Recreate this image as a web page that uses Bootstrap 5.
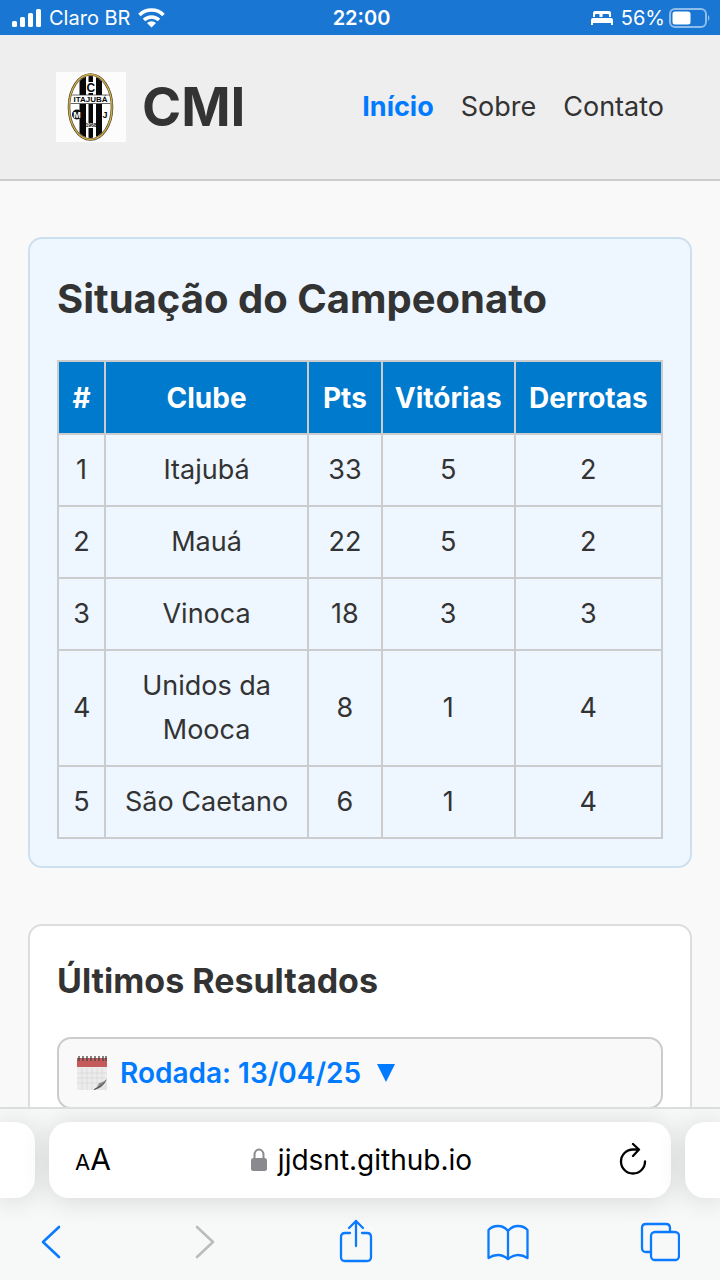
<!DOCTYPE html>
<html lang="pt-BR">
<head>
<meta charset="utf-8">
<meta name="viewport" content="width=device-width, initial-scale=1">
<title>CMI</title>
<link href="https://cdn.jsdelivr.net/npm/bootstrap@5.3.0/dist/css/bootstrap.min.css" rel="stylesheet">
<style>
  body { font-family: Inter, "Liberation Sans", sans-serif; font-size: 27px; line-height: 44px; color: #333; background: #f9f9f9; }
  button { font: inherit; }
  .status-bar { height: 35px; background: #1976d2; color: #fff; font-size: 20px; line-height: 36px; padding: 0 9px 0 12px; }
  .status-side { flex: 1 1 0; }
  .site-header { background: #eee; border-bottom: 2px solid #ccc; padding: 37px 56px; }
  .site-name { font-size: 53px; line-height: 70px; font-weight: 700; margin: 0; }
  .site-nav { gap: 27px; }
  .site-nav a { color: #333; text-decoration: none; }
  .site-nav a.active { color: #007bff; font-weight: 700; }
  .page-main { padding: 56px 28px; gap: 56px; }
  .panel { border: 2px solid #ddd; border-radius: 14px; background: #fff; padding: 27px; }
  .panel-blue { background: #eef6ff; border-color: #cce0f0; }
  .panel h2 { font-size: 40px; line-height: 66px; font-weight: 700; margin: 0 0 28px; }
  .panel h3 { font-size: 34px; line-height: 56px; font-weight: 700; margin: 0 0 28px; }
  .standings { width: 100%; table-layout: fixed; text-align: center; border-collapse: collapse; }
  .standings th, .standings td { border: 2px solid #ccc; padding: 13px 14px; }
  .standings th { background: #007acc; color: #fff; padding: 14px 0 13px; font-size: 28px; }
  .w-rank { width: 7.800%; } .w-club { width: 33.600%; } .w-pts { width: 12.200%; } .w-wins { width: 22%; }
  .round-btn { border: 2px solid #ccc; border-radius: 14px; background: #f9f9f9; color: #007bff; font-size: 28px; font-weight: 600; padding: 12px 17px; text-align: left; }
  .browser-bar { background: #f7f8f8; border-top: 2px solid #dcdddd; padding-top: 13px; }
  .tab-row { gap: 14px; }
  .address, .side-tab { background: #fff; height: 76px; box-shadow: 0 2px 28px rgba(0,0,0,.14); }
  .address { border-radius: 20px; padding: 0 24px 0 26px; color: #000; }
  .address a { color: #000; text-decoration: none; font-size: 28px; gap: 10px; }
  .side-tab { width: 35px; flex: none; }
  .side-left { border-radius: 0 20px 20px 0; }
  .side-right { border-radius: 20px 0 0 20px; }
  .browser-bar { overflow: hidden; }
  .plain-btn { border: 0; background: none; padding: 0; color: inherit; display: flex; align-items: center; justify-content: center; }
  .text-size { width: 60px; line-height: 40px; font-size: 30px; align-items: baseline; justify-content: flex-start; }
  .text-size small { font-size: 22px; }
  .reload { width: 60px; justify-content: flex-end; }
  .tools { padding: 20px 39px 14px 30px; color: #0a7aff; }
  .tools .plain-btn { width: 42px; }
  svg { flex: none; display: block; }
</style>
</head>
<body>
<div class="vh-100 d-flex flex-column overflow-hidden">
  <div class="status-bar d-flex align-items-center flex-shrink-0">
    <div class="status-side d-flex align-items-center gap-2">
      <svg width="29" height="20" viewBox="0 0 29 20" fill="#fff"><rect y="13" width="5" height="6" rx="1.5"/><rect x="8" y="9" width="5" height="10" rx="1.5"/><rect x="16" y="5" width="5" height="14" rx="1.5"/><rect x="24" y="1" width="5" height="18" rx="1.5"/></svg>
      <span>Claro BR</span>
      <svg width="27" height="20" viewBox="0 0 27 20" fill="none" stroke="#fff" stroke-width="3.6"><path d="M1.5 7a17 17 0 0 1 24 0M6 12a10.700 10.700 0 0 1 15 0"/><path d="M13.500 19.500 9 15a6.500 6.500 0 0 1 9 0z" fill="#fff" stroke="none"/></svg>
    </div>
    <strong class="fw-semibold">22:00</strong>
    <div class="status-side d-flex align-items-center justify-content-end">
      <svg class="me-2" width="22" height="16" viewBox="0 0 22 16" fill="#fff"><path d="M2 7V3q0-2 2-2h14q2 0 2 2v4h-2V5q0-1-1-1h-4.500q-1 0-1 1v2h-3V5q0-1-1-1H5Q4 4 4 5v2z"/><path d="M0 15V10q0-2 2-2h18q2 0 2 2v5h-2v-2H2v2z"/></svg>
      <span class="me-1">56%</span>
      <svg width="42" height="20" viewBox="0 0 42 20"><rect x="1" y="1" width="36" height="18" rx="5" fill="none" stroke="#8ebdec" stroke-width="2"/><rect x="3.500" y="3.500" width="18" height="13" rx="2.500" fill="#fff"/><path d="M39 7q3 3 0 6z" fill="#8ebdec"/></svg>
    </div>
  </div>

  <div class="flex-grow-1 overflow-hidden">
    <header class="site-header d-flex align-items-center justify-content-between">
      <div class="d-flex align-items-center gap-3">
        <svg width="70" height="70" viewBox="0 0 70 70" role="img" aria-label="Itajubá">
          <defs><clipPath id="oval"><ellipse cx="34.500" cy="35" rx="20" ry="31"/></clipPath></defs>
          <rect width="70" height="70" fill="#fcfcfc"/>
          <ellipse cx="34.500" cy="35" rx="21.500" ry="32.500" fill="#fff" stroke="#4b4524" stroke-width="2.600"/>
          <ellipse cx="34.500" cy="35" rx="21.500" ry="32.500" fill="none" stroke="#d0ad4e" stroke-width="1.300"/>
          <g clip-path="url(#oval)"><path d="M23.500 0h6.500v70h-6.500zM32.500 0h4.500v70h-4.500zM40 0h6v70h-6z" fill="#080808"/>
          <path d="M30 10h10v11h-10zM13 23h43v9H13zM30 51h10v5H30z" fill="#fff"/><path d="M13 23h43M13 31.500h43" stroke="#222" stroke-width=".7"/></g>
          <circle cx="21" cy="42.500" r="5" fill="#111"/>
          <g font-family="Liberation Sans, sans-serif" font-weight="700" text-anchor="middle" fill="#080808"><text x="34.800" y="20" font-size="12">C</text><text x="34.500" y="30" font-size="8">ITAJUBÁ</text><text x="21" y="45.800" font-size="9" fill="#fff">M</text><text x="49" y="46" font-size="9">J</text><text x="35" y="55" font-size="5">1968</text></g>
        </svg>
        <h1 class="site-name">CMI</h1>
      </div>
      <nav class="site-nav d-flex">
        <a class="active" href="#inicio">Início</a><a href="#sobre">Sobre</a><a href="#contato">Contato</a>
      </nav>
    </header>

    <main class="page-main d-flex flex-column">
      <section class="panel panel-blue">
        <h2>Situação do Campeonato</h2>
        <table class="standings">
          <colgroup><col class="w-rank"><col class="w-club"><col class="w-pts"><col class="w-wins"><col></colgroup>
          <thead><tr><th scope="col">#</th><th scope="col">Clube</th><th scope="col">Pts</th><th scope="col">Vitórias</th><th scope="col">Derrotas</th></tr></thead>
          <tbody>
            <tr><td>1</td><td>Itajubá</td><td>33</td><td>5</td><td>2</td></tr>
            <tr><td>2</td><td>Mauá</td><td>22</td><td>5</td><td>2</td></tr>
            <tr><td>3</td><td>Vinoca</td><td>18</td><td>3</td><td>3</td></tr>
            <tr><td>4</td><td>Unidos da Mooca</td><td>8</td><td>1</td><td>4</td></tr>
            <tr><td>5</td><td>São Caetano</td><td>6</td><td>1</td><td>4</td></tr>
          </tbody>
        </table>
      </section>

      <section class="panel">
        <h3>Últimos Resultados</h3>
        <button type="button" class="round-btn w-100 d-flex align-items-center">
          <svg width="32" height="36" viewBox="0 0 32 36">
            <path d="M1 4h30v24q-7 1-9 7H1z" fill="#ececec"/>
            <path d="M1 3h30v9H1z" fill="#c45a5a"/>
            <path d="M6 13v22M11 13v22M16 13v22M21 13v22M26 13v17M1 18h30M1 23h30M1 28h28" stroke="#dcdcdc"/>
            <path d="M31 24q-5 4-8 4-1 5-7 7 11 0 15-11z" fill="#8b8b8b"/><path d="M31 24q-6 8-15 11 9-1 15-11z" fill="#444"/><path d="M31 26q-3 7-12 9h12z" fill="#e4e4e4"/>
            <path d="M3 1v5M7 1v5M11 1v5M15 1v5M19 1v5M23 1v5M27 1v5M30 1v5" stroke="#444" stroke-width="1.300"/>
          </svg>
          <span class="ms-2 ps-1">Rodada: 13/04/25</span>
          <svg class="ms-3" width="18" height="18" viewBox="0 0 18 18"><path d="M0 0h18L9 18z" fill="#007bff"/></svg>
        </button>
      </section>
    </main>
  </div>

  <footer class="browser-bar flex-shrink-0">
    <div class="tab-row d-flex">
      <div class="side-tab side-left"></div>
      <div class="address flex-grow-1 d-flex align-items-center justify-content-between">
        <button type="button" class="plain-btn text-size" aria-label="Tamanho do texto"><small>A</small>A</button>
        <a class="d-flex align-items-center" href="https://jjdsnt.github.io">
          <svg width="18" height="24" viewBox="0 0 18 24"><rect x="1" y="10" width="16" height="13" rx="2.500" fill="#8a8a8e"/><path d="M4.500 11V7a4.500 5.500 0 0 1 9 0v4" fill="none" stroke="#8a8a8e" stroke-width="2"/></svg>
          <span>jjdsnt.github.io</span>
        </a>
        <button type="button" class="plain-btn reload" aria-label="Recarregar"><svg width="28" height="34" viewBox="0 0 28 34" fill="none" stroke="#000" stroke-width="2.300" stroke-linecap="round" stroke-linejoin="round"><path d="M26 18.500A12 12 0 1 1 14 6.500h5M14 1l6 5.500-6 6.500"/></svg></button>
      </div>
      <div class="side-tab side-right"></div>
    </div>
    <nav class="tools d-flex align-items-center justify-content-between">
      <button type="button" class="plain-btn" aria-label="Voltar"><svg width="26" height="48" viewBox="0 0 26 48" fill="none" stroke="currentColor" stroke-width="2.600" stroke-linecap="round" stroke-linejoin="round"><path d="M21 9 5 24l16 15"/></svg></button>
      <button type="button" class="plain-btn" aria-label="Avançar" disabled><svg width="26" height="48" viewBox="0 0 26 48" fill="none" stroke="#bcbcbe" stroke-width="2.600" stroke-linecap="round" stroke-linejoin="round"><path d="m7 9 16 15L7 39"/></svg></button>
      <button type="button" class="plain-btn" aria-label="Compartilhar"><svg width="34" height="48" viewBox="0 0 34 48" fill="none" stroke="currentColor" stroke-width="2.300" stroke-linecap="round" stroke-linejoin="round"><path d="M11 15H6q-4 0-4 4v20q0 4 4 4h22q4 0 4-4V19q0-4-4-4h-5M17 28V3M10 10l7-7 7 7"/></svg></button>
      <button type="button" class="plain-btn" aria-label="Favoritos"><svg width="42" height="48" viewBox="0 0 42 48" fill="none" stroke="currentColor" stroke-width="2.300" stroke-linecap="round" stroke-linejoin="round"><path d="M21 41V13Q17 8 11 8T1.500 12v28Q6 37 11 37t10 4q5-4 10-4t9.500 3V12Q37 8 31 8t-10 5"/></svg></button>
      <button type="button" class="plain-btn" aria-label="Abas"><svg width="40" height="48" viewBox="0 0 40 48" fill="none" stroke="currentColor" stroke-width="2.300" stroke-linejoin="round"><rect x="11" y="14" width="28" height="28" rx="4"/><path d="M11 34H6q-4 0-4-4V10q0-4 4-4h20q4 0 4 4v4"/></svg></button>
    </nav>
  </footer>
</div>
<script src="https://cdn.jsdelivr.net/npm/bootstrap@5.3.0/dist/js/bootstrap.bundle.min.js"></script>
</body>
</html>
